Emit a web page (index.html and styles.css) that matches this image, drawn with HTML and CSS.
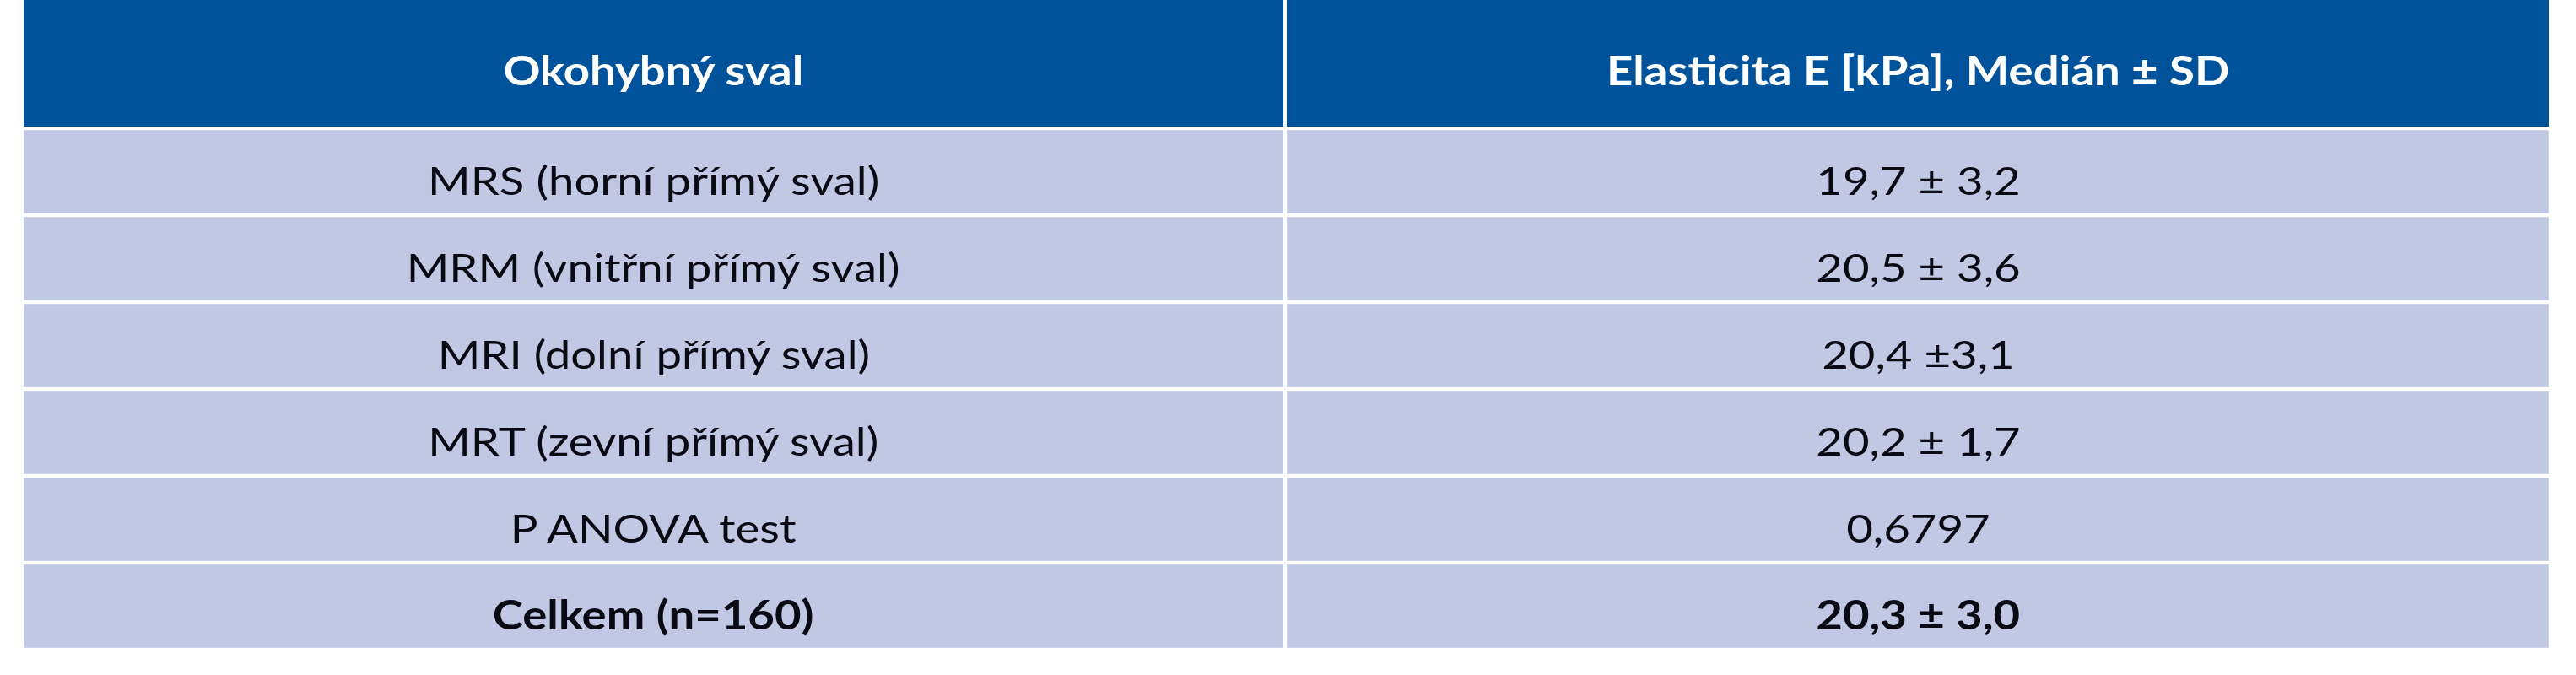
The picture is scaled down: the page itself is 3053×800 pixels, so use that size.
FILE: index.html
```html
<!DOCTYPE html>
<html lang="cs">
<head>
<meta charset="utf-8">
<title>Elasticita okohybných svalů</title>
<link rel="stylesheet" href="styles.css">
</head>
<body>
<div class="table">
  <div class="cell head"><span class="t">Okohybný sval</span></div>
  <div class="cell head"><span class="t">Elasticita E [kPa], Medián ± SD</span></div>

  <div class="cell"><span class="t">MRS (horní přímý sval)</span></div>
  <div class="cell"><span class="t">19,7 ± 3,2</span></div>

  <div class="cell"><span class="t">MRM (vnitřní přímý sval)</span></div>
  <div class="cell"><span class="t">20,5 ± 3,6</span></div>

  <div class="cell"><span class="t">MRI (dolní přímý sval)</span></div>
  <div class="cell"><span class="t">20,4 ±3,1</span></div>

  <div class="cell"><span class="t">MRT (zevní přímý sval)</span></div>
  <div class="cell"><span class="t">20,2 ± 1,7</span></div>

  <div class="cell"><span class="t">P ANOVA test</span></div>
  <div class="cell"><span class="t">0,6797</span></div>

  <div class="cell total"><span class="t">Celkem (n=160)</span></div>
  <div class="cell total"><span class="t">20,3 ± 3,0</span></div>
</div>
</body>
</html>
```

FILE: styles.css
```css
html, body {
  margin: 0;
  padding: 0;
  background: #ffffff;
}

body {
  font-family: Lato, "Liberation Sans", sans-serif;
  font-size: 47px;
  line-height: 1;
  color: #0a0a14;
}

.table {
  margin-left: 28px;
  width: 2993px;
  display: grid;
  grid-template-columns: 1493px 1496px;
  grid-template-rows: 150px repeat(6, 99px);
  gap: 4px;
}

.cell {
  background: #c1c8e3;
  display: flex;
  justify-content: center;
  align-items: flex-start;
  padding-top: 36px;
  box-sizing: border-box;
  box-shadow: inset 0 0 0 1px #cdd3ea;
}

.cell.head {
  background: #00529b;
  color: #ffffff;
  font-weight: 700;
  padding-top: 60px;
  box-shadow: none;
}

.cell.total {
  font-weight: 700;
}

.t {
  display: inline-block;
  white-space: nowrap;
  transform: scaleX(1.16);
}
```
